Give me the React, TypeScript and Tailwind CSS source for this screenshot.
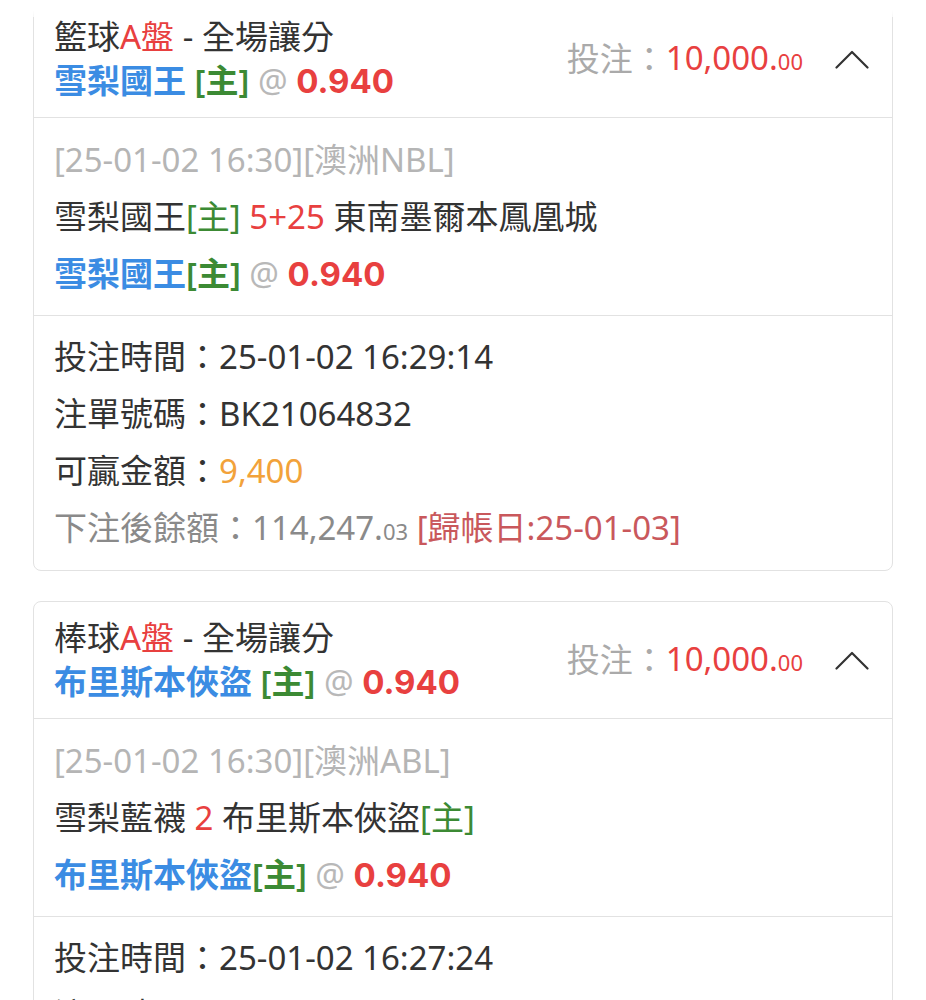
import React from 'react';

interface Bet {
  sport: string;
  team: string;
  date: string;
  league: string;
  matchLine: React.ReactNode;
  betTime: string;
  orderNo: string;
  win: string;
  balance: [string, string];
  settle: string;
}

const bets: Bet[] = [
  {
    sport: '籃球',
    team: '雪梨國王',
    date: '25-01-02 16:30',
    league: '澳洲NBL',
    matchLine: (
      <>
        雪梨國王<span className="text-[#3c8a34]">[主]</span>
        <span className="text-[#e8403f]"> 5+25 </span>東南墨爾本鳳凰城
      </>
    ),
    betTime: '25-01-02 16:29:14',
    orderNo: 'BK21064832',
    win: '9,400',
    balance: ['114,247.', '03'],
    settle: '25-01-03',
  },
  {
    sport: '棒球',
    team: '布里斯本俠盜',
    date: '25-01-02 16:30',
    league: '澳洲ABL',
    matchLine: (
      <>
        雪梨藍襪<span className="text-[#e8403f]"> 2 </span>布里斯本俠盜
        <span className="text-[#3c8a34]">[主]</span>
      </>
    ),
    betTime: '25-01-02 16:27:24',
    orderNo: 'BK21064790',
    win: '9,400',
    balance: ['104,247.', '03'],
    settle: '25-01-03',
  },
];

function ChevronUp() {
  return (
    <svg width="34" height="19" viewBox="0 0 34 19" fill="none">
      <polyline points="1.5,17.5 17,2 32.5,17.5" stroke="#333" strokeWidth="2.2" strokeLinecap="round" strokeLinejoin="round" />
    </svg>
  );
}

// 賠率：粗體數字較寬
function Odds() {
  return (
    <>
      <span className="text-[#b8b8b8]"> @ </span>
      <span className="font-[family-name:Inter,sans-serif] font-bold text-[#e8403f]">0.940</span>
    </>
  );
}

function BetCard({ bet, first }: { bet: Bet; first?: boolean }) {
  return (
    <div className={`ml-[33px] mr-[33px] rounded-lg border border-[#e2e2e2] bg-white ${first ? '' : 'mt-[30px]'}`}>
      {/* 標題 */}
      <div className="flex items-center justify-between border-b border-[#e2e2e2] pl-5 pr-[23px] py-[14px] leading-[44px]">
        <div className="text-[#333]">
          <div>
            {bet.sport}
            <span className="text-[#e8403f]">A盤</span> - 全場讓分
          </div>
          <div>
            <span className="font-semibold text-[#3b8ce3]">{bet.team}</span>{' '}
            <span className="font-semibold text-[#3c8a34]">[主]</span>
            <Odds />
          </div>
        </div>
        <div className="flex items-center">
          <span className="text-[#aaaaaa]">投注：</span>
          <span className="text-[#e8403f]">
            10,000.<span className="text-[22px]">00</span>
          </span>
          <span className="ml-[32px] flex items-center">
            <ChevronUp />
          </span>
        </div>
      </div>

      {/* 賽事 */}
      <div className="border-b border-[#e2e2e2] px-5 pt-[13px] pb-[12px] leading-[57px] text-[#333]">
        <div className="text-[#b5b5b5]">
          [{bet.date}][{bet.league}]
        </div>
        <div>{bet.matchLine}</div>
        <div>
          <span className="font-semibold text-[#3b8ce3]">{bet.team}</span>
          <span className="font-semibold text-[#3c8a34]">[主]</span>
          <Odds />
        </div>
      </div>

      {/* 注單 */}
      <div className="px-5 pt-[12px] pb-[10px] leading-[57px] text-[#333]">
        <div>投注時間：{bet.betTime}</div>
        <div>注單號碼：{bet.orderNo}</div>
        <div>
          可贏金額：<span className="text-[#f2a23a]">{bet.win}</span>
        </div>
        <div className="text-[#8a8a8a]">
          下注後餘額：{bet.balance[0]}
          <span className="text-[22px]">{bet.balance[1]}</span>
          <span className="text-[#c9585c]"> [歸帳日:{bet.settle}]</span>
        </div>
      </div>
    </div>
  );
}

export default function App() {
  return (
    <div className="relative min-h-screen bg-white text-[33px] font-[family-name:'Noto_Sans','Noto_Sans_CJK_TC',sans-serif]">
      {bets.map((b, i) => (
        <BetCard key={i} bet={b} first={i === 0} />
      ))}
      {/* 頂部淡出 */}
      <div className="pointer-events-none absolute left-0 right-0 top-0 h-[17px] bg-gradient-to-b from-white from-60% to-white/70" />
    </div>
  );
}
